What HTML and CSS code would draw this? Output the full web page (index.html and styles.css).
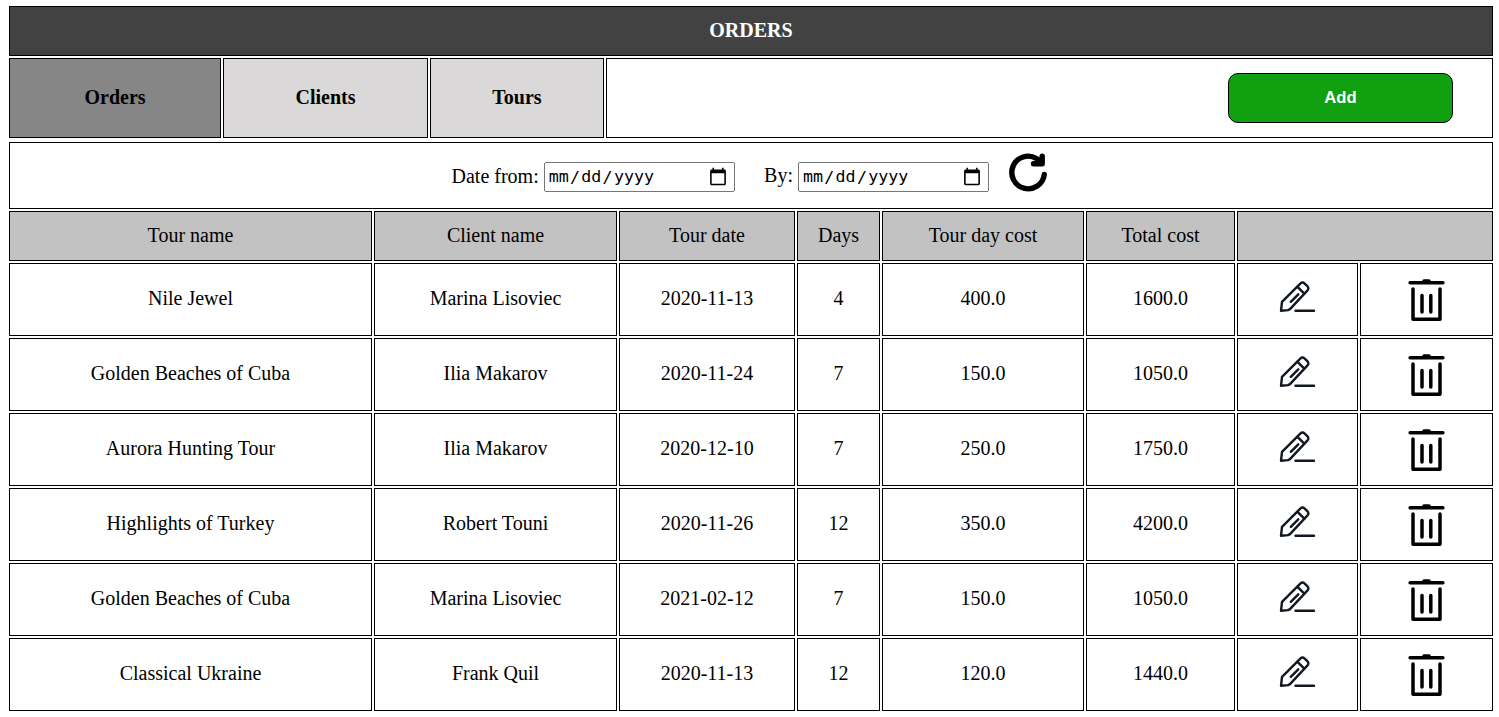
FILE: index.html
```html
<!DOCTYPE html>
<html lang="en">
<head>
<meta charset="utf-8">
<title>Orders</title>
<link rel="stylesheet" href="styles.css">
</head>
<body>
<svg width="0" height="0" class="symbols">
  <symbol id="edit" viewBox="0 0.7 40 40">
    <g fill="none" stroke="#101820" stroke-width="2.400" stroke-linecap="round" stroke-linejoin="round">
      <path d="M3 31.500L4 22.500L22.300 4.300Q24.500 2.200 26.700 4.300L29.300 6.900Q31.500 9.100 29.300 11.300L12 29.800L10 30.800Z"/>
      <path d="M19.500 7.500L26.300 14.300M12.800 22.500L20.300 15M17.500 31.500H36"/>
    </g>
  </symbol>
  <symbol id="trash" viewBox="-0.5 0 40 46">
    <g fill="none" stroke="#000" stroke-width="3.500" stroke-linecap="round" stroke-linejoin="round">
      <path d="M3.600 5.800H36.400M17.500 4H22.500" />
      <path d="M6.500 12V42.300H33.500V12" />
      <path d="M15.500 18.500V35M24.300 18.500V35" />
    </g>
  </symbol>
</svg>
<main class="page">
  <header class="title">ORDERS</header>
  <nav class="tabs">
    <a class="tab active">Orders</a>
    <a class="tab">Clients</a>
    <a class="tab">Tours</a>
    <div class="actions"><button class="add">Add</button></div>
  </nav>
  <form class="filter">
    <label class="field from"><span class="from-text">Date from:</span> <input type="date"></label>
    <label class="field by"><span class="by-text">By:</span> <input type="date"></label>
    <svg class="refresh" viewBox="0 0 40 40"><path d="M35.300 22.500A16.300 16.300 0 1 1 27.500 6.500L32.500 11M33.200 4.200V11.700H24.500" fill="none" stroke="#000" stroke-width="5.400" stroke-linecap="round" stroke-linejoin="round"/></svg>
  </form>
  <section class="grid">
    <div class="head">Tour name</div><div class="head">Client name</div><div class="head">Tour date</div><div class="head">Days</div><div class="head">Tour day cost</div><div class="head">Total cost</div><div class="head wide"></div>

    <div class="cell">Nile Jewel</div><div class="cell">Marina Lisoviec</div><div class="cell">2020-11-13</div><div class="cell">4</div><div class="cell">400.0</div><div class="cell">1600.0</div>
    <div class="cell"><svg class="edit"><use href="#edit"/></svg></div><div class="cell"><svg class="trash"><use href="#trash"/></svg></div>

    <div class="cell">Golden Beaches of Cuba</div><div class="cell">Ilia Makarov</div><div class="cell">2020-11-24</div><div class="cell">7</div><div class="cell">150.0</div><div class="cell">1050.0</div>
    <div class="cell"><svg class="edit"><use href="#edit"/></svg></div><div class="cell"><svg class="trash"><use href="#trash"/></svg></div>

    <div class="cell">Aurora Hunting Tour</div><div class="cell">Ilia Makarov</div><div class="cell">2020-12-10</div><div class="cell">7</div><div class="cell">250.0</div><div class="cell">1750.0</div>
    <div class="cell"><svg class="edit"><use href="#edit"/></svg></div><div class="cell"><svg class="trash"><use href="#trash"/></svg></div>

    <div class="cell">Highlights of Turkey</div><div class="cell">Robert Touni</div><div class="cell">2020-11-26</div><div class="cell">12</div><div class="cell">350.0</div><div class="cell">4200.0</div>
    <div class="cell"><svg class="edit"><use href="#edit"/></svg></div><div class="cell"><svg class="trash"><use href="#trash"/></svg></div>

    <div class="cell">Golden Beaches of Cuba</div><div class="cell">Marina Lisoviec</div><div class="cell">2021-02-12</div><div class="cell">7</div><div class="cell">150.0</div><div class="cell">1050.0</div>
    <div class="cell"><svg class="edit"><use href="#edit"/></svg></div><div class="cell"><svg class="trash"><use href="#trash"/></svg></div>

    <div class="cell">Classical Ukraine</div><div class="cell">Frank Quil</div><div class="cell">2020-11-13</div><div class="cell">12</div><div class="cell">120.0</div><div class="cell">1440.0</div>
    <div class="cell"><svg class="edit"><use href="#edit"/></svg></div><div class="cell"><svg class="trash"><use href="#trash"/></svg></div>
  </section>
</main>
</body>
</html>
```
FILE: styles.css
```css
* { box-sizing: border-box; }
body {
  margin: 0;
  background: #fff;
  color: #000;
  font: 20px/23px "Liberation Serif", "Times New Roman", serif;
}
.symbols { display: block; }
.page { width: 1484px; margin: 6px 0 0 9px; }
.title, .tab, .actions, .filter, .head, .cell {
  display: flex;
  align-items: center;
  justify-content: center;
  border: 1px solid #000;
}
.title {
  height: 50px;
  padding-bottom: 1px;
  background: #424242;
  color: #fff;
  font-weight: bold;
}
.tabs {
  display: grid;
  grid-template-columns: 212px 205px 174px 887px;
  gap: 2px;
  height: 80px;
  margin-top: 2px;
}
.tab { padding-bottom: 1px; background: #dad8d9; font-weight: bold; }
.tab.active { background: #868686; }
.actions { justify-content: flex-end; padding-right: 39px; }
.add {
  width: 225px;
  height: 50px;
  padding: 0;
  border: 1px solid #000;
  border-radius: 10px;
  background: #10a010;
  color: #fff;
  font: bold 16.667px "Liberation Sans", Arial, sans-serif;
}
.filter {
  height: 67px;
  margin-top: 4px;
  justify-content: flex-start;
  align-items: flex-start;
  padding: 19px 0 0 441.5px;
}
.field { display: flex; align-items: center; gap: 5px; height: 30px; }
.by { margin-left: 29.4px; }
.from-text { padding-bottom: 2px; }
.by-text { padding-bottom: 4px; }
.field input {
  zoom: 1.25;
  width: 152.8px;
  height: 24px;
  margin: 0;
  padding: 1px 2px 1px 1.4px;
  font-size: 13.333px;
}
.field input::-webkit-calendar-picker-indicator { width: 16px; height: 16px; }
.refresh { width: 40px; height: 40px; margin: -10px 0 0 20px; }
.grid {
  display: grid;
  grid-template-columns: 363px 243px 176px 83px 202px 149px 121px 133px;
  grid-template-rows: 50px;
  grid-auto-rows: 73px;
  gap: 2px;
  margin-top: 2px;
}
.head { padding-bottom: 1px; background: #c2c2c2; }
.wide { grid-column: span 2; }
.cell { padding-bottom: 2px; }
.edit { width: 40px; height: 40px; margin: 2px 0 0 0; }
.trash { width: 40px; height: 46px; margin: 3px 1px 0 0; }
```
